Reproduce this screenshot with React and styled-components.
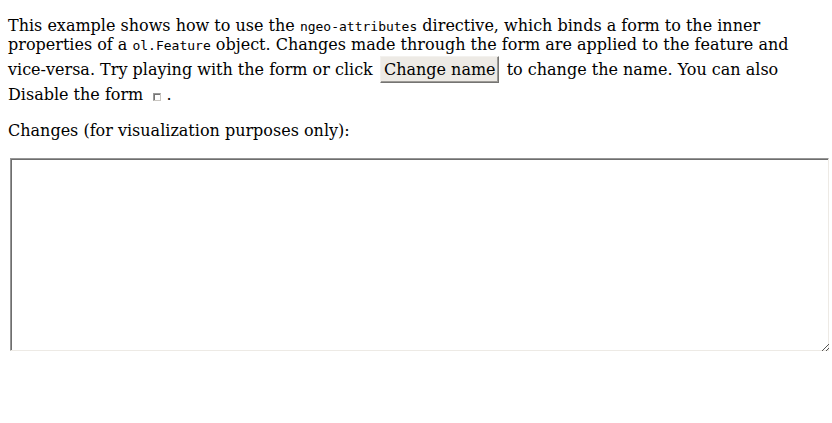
import React, { useState } from "react";
import styled, { createGlobalStyle } from "styled-components";

const GlobalStyle = createGlobalStyle`
  body {
    margin: 0;
    background: #fff;
    color: #000;
    font-family: "DejaVu Serif", serif;
    font-size: 16px;
  }
`;

const Page = styled.main`
  display: flex;
  flex-direction: column;
  padding: 16px 0;
`;

const Paragraph = styled.p`
  margin: 0 8px 17px;
`;

const Code = styled.code`
  font-family: "DejaVu Sans Mono", monospace;
  font-size: 13px;
`;

const ChangeButton = styled.button`
  margin: 2px 3px 2px 2px;
  padding: 3px 2px 3px 3px;
  border: 1px solid;
  border-color: #f3f1ee #757472 #757472 #f3f1ee;
  box-shadow: inset -1px -1px #9c9a96;
  background: #edeae5;
  color: #000;
  font-family: inherit;
  font-size: 16px;
`;

const DisableBox = styled.input`
  appearance: none;
  box-sizing: border-box;
  width: 8px;
  height: 8px;
  margin: 0 5px;
  border: 1px solid;
  border-color: #9a9a9a #c9c6c1 #c9c6c1 #9a9a9a;
  box-shadow: inset 1px 1px #757575;
  background: #fff;
  vertical-align: -1px;
`;

const LogLabel = styled.label`
  margin: 0 8px 18px;
`;

const LogFrame = styled.div`
  position: relative;
  display: flex;
  margin: 0 3px 0 10px;
`;

const ChangesLog = styled.textarea`
  flex: 1;
  box-sizing: border-box;
  height: 193px;
  margin: 0;
  padding: 3px;
  border: 1px solid;
  border-color: #969696 #edeae5 #edeae5 #969696;
  box-shadow: inset 1px 1px #6e6e6e;
  background: #fff;
  font-family: "DejaVu Sans Mono", monospace;
  font-size: 13px;
  resize: vertical;

  &::-webkit-resizer {
    background: transparent;
  }
`;

const Grip = styled.svg`
  position: absolute;
  right: 0;
  bottom: 0;
  pointer-events: none;
`;

export default function App() {
  const [log, setLog] = useState("");
  return (
    <Page>
      <GlobalStyle />
      <Paragraph>
        This example shows how to use the <Code>ngeo-attributes</Code> directive,
        which binds a form to the inner properties of a <Code>ol.Feature</Code>{" "}
        object. Changes made through the form are applied to the feature and
        vice-versa. Try playing with the form or click{" "}
        <ChangeButton type="button">Change name</ChangeButton> to change the
        name. You can also <label htmlFor="disable">Disable the form</label>{" "}
        <DisableBox id="disable" type="checkbox" />.
      </Paragraph>
      <LogLabel htmlFor="changes">
        Changes (for visualization purposes only):
      </LogLabel>
      <LogFrame>
        <ChangesLog
          id="changes"
          value={log}
          onChange={(event) => setLog(event.target.value)}
        />
        <Grip width="8" height="8" viewBox="0 0 8 8" aria-hidden="true">
          <path
            d="M1 7h1v1h-1zM2 6h1v1h-1zM3 5h1v1h-1zM4 4h1v1h-1zM5 3h1v1h-1zM6 2h1v1h-1zM7 1h1v1h-1zM5 7h1v1h-1zM6 6h1v1h-1zM7 5h1v1h-1z"
            fill="#555"
            shapeRendering="crispEdges"
          />
        </Grip>
      </LogFrame>
    </Page>
  );
}
